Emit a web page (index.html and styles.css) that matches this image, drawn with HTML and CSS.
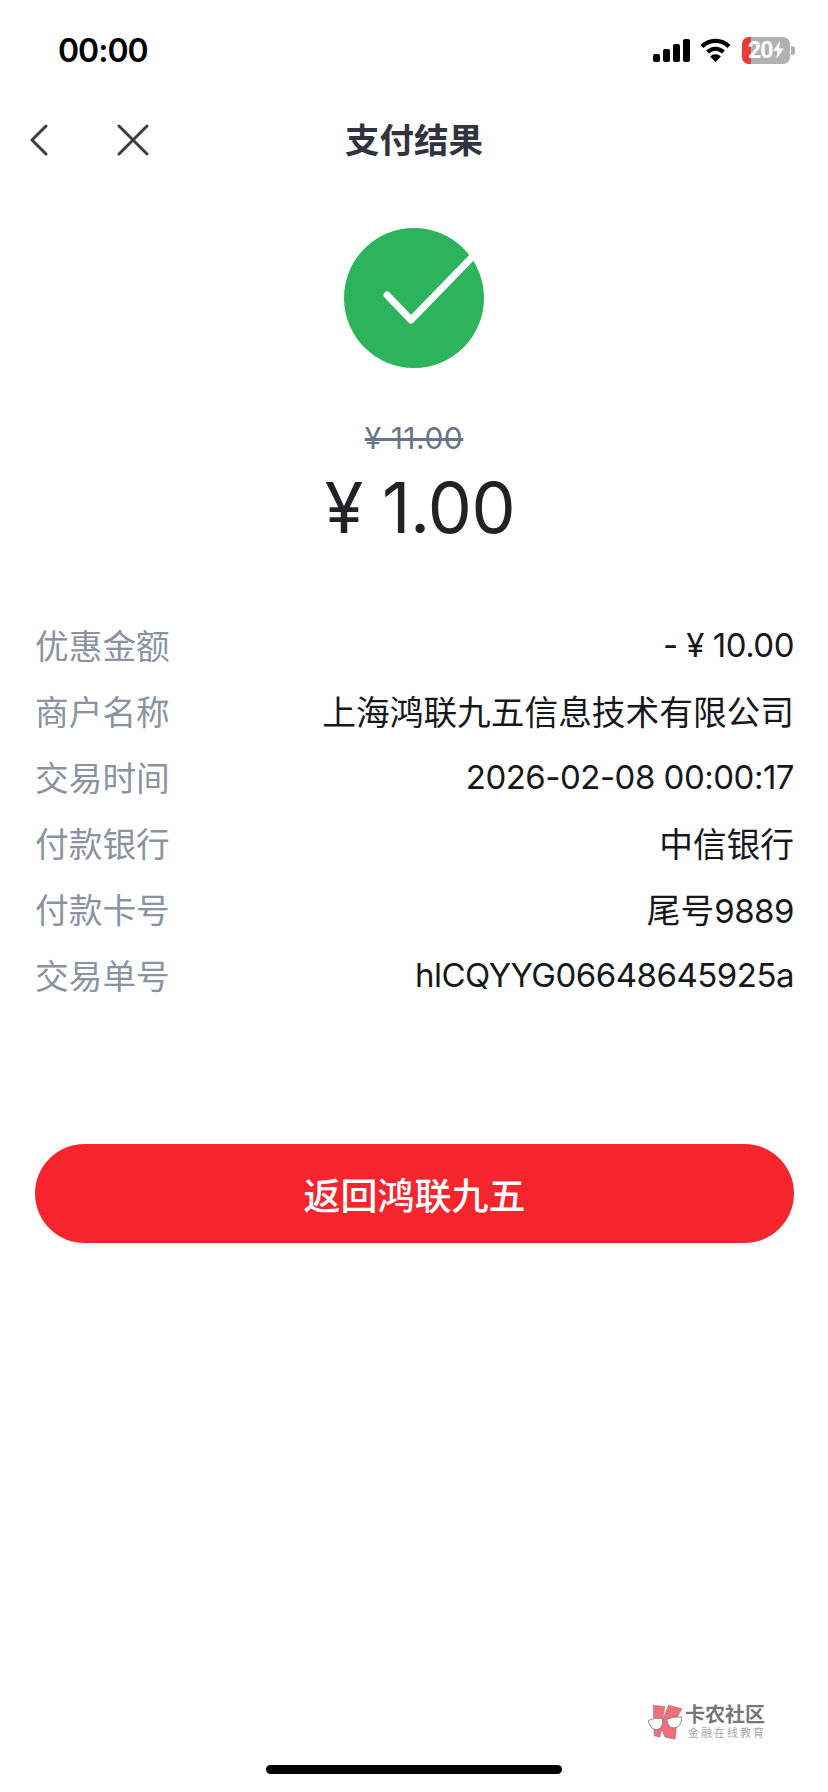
FILE: index.html
```html
<!DOCTYPE html>
<html lang="zh-CN">
<head>
    <meta charset="UTF-8">
    <meta name="viewport" content="width=device-width, initial-scale=1.0">
    <title>支付结果</title>
    <link rel="stylesheet" href="styles.css">
</head>
<body>
    <div class="page">
        <div class="status-bar">
            <span class="clock">00:00</span>
            <div class="status-icons">
                <svg class="signal" width="37" height="23" viewBox="0 0 37 23">
                    <rect x="0" y="15" width="7" height="8" rx="2"/>
                    <rect x="10" y="10" width="7" height="13" rx="2"/>
                    <rect x="20" y="5" width="7" height="18" rx="2"/>
                    <rect x="30" y="0" width="7" height="23" rx="2"/>
                </svg>
                <svg class="wifi" width="31" height="24" viewBox="0 0 31 24">
                    <path d="M2 8.5a19 19 0 0 1 27 0" fill="none" stroke="#000" stroke-width="4.2"/>
                    <path d="M7.6 14a11.2 11.2 0 0 1 15.8 0" fill="none" stroke="#000" stroke-width="4.2"/>
                    <path d="M15.5 24l-5.4-5.6a7.6 7.6 0 0 1 10.8 0z"/>
                </svg>
                <div class="battery">
                    <div class="battery-body">
                        <span class="battery-low"></span>
                        <span class="battery-num">20</span>
                        <svg class="bolt" width="11" height="18" viewBox="0 0 11 18">
                            <path d="M7 0L0 10h4.4L3.4 18 11 7.4H6.2z" fill="#fff"/>
                        </svg>
                    </div>
                    <span class="battery-cap"></span>
                </div>
            </div>
        </div>

        <div class="nav">
            <div class="nav-btns">
                <svg width="20" height="32" viewBox="0 0 20 32">
                    <path d="M17 2L3 16l14 14" fill="none" stroke="#3c3c48" stroke-width="3" stroke-linecap="round" stroke-linejoin="round"/>
                </svg>
                <svg width="32" height="32" viewBox="0 0 32 32">
                    <path d="M2 2l28 28M30 2L2 30" fill="none" stroke="#3c3c48" stroke-width="3" stroke-linecap="round"/>
                </svg>
            </div>
            <h1 class="nav-title">支付结果</h1>
        </div>

        <div class="result">
            <svg class="result-icon" width="140" height="140" viewBox="0 0 140 140">
                <circle cx="70" cy="70" r="70" fill="#2cb35b"/>
                <path d="M43 67l24 25L134 23" fill="none" stroke="#fff" stroke-width="7" stroke-linecap="round" stroke-linejoin="round"/>
            </svg>
            <div class="old-price">¥ 11.00</div>
            <div class="amount">¥ 1.00</div>
        </div>

        <div class="details">
            <div class="row"><span class="row-label">优惠金额</span><span class="row-value"><span class="num">- ¥ 10.00</span></span></div>
            <div class="row"><span class="row-label">商户名称</span><span class="row-value">上海鸿联九五信息技术有限公司</span></div>
            <div class="row"><span class="row-label">交易时间</span><span class="row-value"><span class="num">2026-02-08 00:00:17</span></span></div>
            <div class="row"><span class="row-label">付款银行</span><span class="row-value">中信银行</span></div>
            <div class="row"><span class="row-label">付款卡号</span><span class="row-value">尾号<span class="num">9889</span></span></div>
            <div class="row"><span class="row-label">交易单号</span><span class="row-value"><span class="num">hlCQYYG06648645925a</span></span></div>
        </div>

        <button class="back-btn">返回鸿联九五</button>

        <div class="spacer"></div>
        <div class="home-bar"></div>

        <!-- watermark sits on top of the page -->
        <div class="watermark">
            <svg width="34" height="36" viewBox="85 75 100 105">
                <path d="M100 78L135 82 128 120 145 78 185 88 165 125 168 150 165 178 135 172 125 150 120 172 103 168z" fill="#ef6f7c" stroke="#8a7a7c" stroke-width="1.5"/>
                <path d="M86 123Q105 112 128 118 130 150 108 150 90 148 86 123zM140 120Q160 110 185 113 183 145 160 145 143 143 140 120z" fill="#fff" stroke="#777" stroke-width="2.5"/>
            </svg>
            <div class="watermark-text">
                <div class="watermark-name">卡农社区</div>
                <div class="watermark-sub">金融在线教育</div>
            </div>
        </div>
    </div>
</body>
</html>
```

FILE: styles.css
```css
* {
    box-sizing: border-box;
}

body {
    margin: 0;
    background-color: #fff;
    font-family: Inter, "Noto Sans CJK SC", sans-serif;
    color: #1c1c22;
}

.page {
    position: relative;
    width: 828px;
    height: 1792px;
    display: flex;
    flex-direction: column;
    overflow: hidden;
}

.status-bar {
    height: 100px;
    display: flex;
    justify-content: space-between;
    align-items: center;
    padding: 0 33px 0 58px;
}

.clock {
    font-size: 32px;
    font-weight: 600;
    letter-spacing: -1px;
    color: #000;
}

.status-icons {
    display: flex;
    align-items: center;
    gap: 10px;
}

.battery {
    display: flex;
    align-items: center;
    gap: 1px;
    margin-left: 1px;
}

.battery-body {
    position: relative;
    width: 48px;
    height: 27px;
    border-radius: 7px;
    background-color: #b1b1b1;
    overflow: hidden;
    display: flex;
    align-items: center;
    padding-left: 6px;
    gap: 1px;
}

.battery-low {
    position: absolute;
    left: 0;
    top: 0;
    bottom: 0;
    width: 9px;
    background-color: #f03a36;
}

.battery-num {
    position: relative;
    font-family: Roboto, sans-serif;
    font-size: 23px;
    font-weight: 700;
    letter-spacing: -1px;
    line-height: 27px;
    color: #fff;
}

.bolt {
    position: relative;
    flex: none;
}

.battery-cap {
    width: 4px;
    height: 9px;
    border-radius: 0 3px 3px 0;
    background-color: #b1b1b1;
}

.nav {
    position: relative;
    height: 80px;
    padding-bottom: 4px;
    display: flex;
    align-items: center;
    justify-content: center;
}

.nav-btns {
    position: absolute;
    left: 29px;
    top: 24px;
    display: flex;
    align-items: center;
    gap: 68px;
}

.nav-title {
    margin: 0;
    font-size: 34.5px;
    font-weight: 700;
    color: #333340;
}

.result {
    display: flex;
    flex-direction: column;
    align-items: center;
    padding-top: 48px;
}

.result-icon {
    display: block;
    overflow: visible;
}

.old-price {
    margin-top: 50px;
    font-size: 30px;
    line-height: 40px;
    letter-spacing: 0.5px;
    color: #6a7488;
    text-decoration: line-through;
}

.amount {
    margin-top: 5px;
    padding-left: 12px;
    font-size: 70px;
    line-height: 90px;
    letter-spacing: -0.5px;
    color: #222226;
}

.details {
    margin-top: 58px;
    padding: 0 34px 0 35px;
}

.row {
    display: flex;
    justify-content: space-between;
    align-items: center;
    height: 66px;
    font-size: 33.7px;
}

.row-label {
    color: #8b93a1;
}

.row-value {
    color: #17171c;
}

.num {
    font-size: 33px;
    letter-spacing: -0.5px;
}

.back-btn {
    display: block;
    width: 759px;
    height: 99px;
    margin: 137px 0 0 35px;
    border: none;
    border-radius: 50px;
    background-color: #f5242d;
    color: #fff;
    font-family: inherit;
    font-size: 37px;
    font-weight: 500;
}

.spacer {
    flex: 1;
}

.home-bar {
    width: 296px;
    height: 9px;
    margin: 0 auto 18px;
    border-radius: 5px;
    background-color: #000;
}

.watermark {
    position: absolute;
    left: 648px;
    top: 1704px;
    display: flex;
    align-items: center;
    gap: 3px;
}

.watermark-name {
    font-size: 20px;
    line-height: 22px;
    font-weight: 700;
    color: #767676;
}

.watermark-sub {
    font-size: 11px;
    line-height: 14px;
    letter-spacing: 2px;
    color: #a8a8a8;
    padding-left: 3px;
}
```
